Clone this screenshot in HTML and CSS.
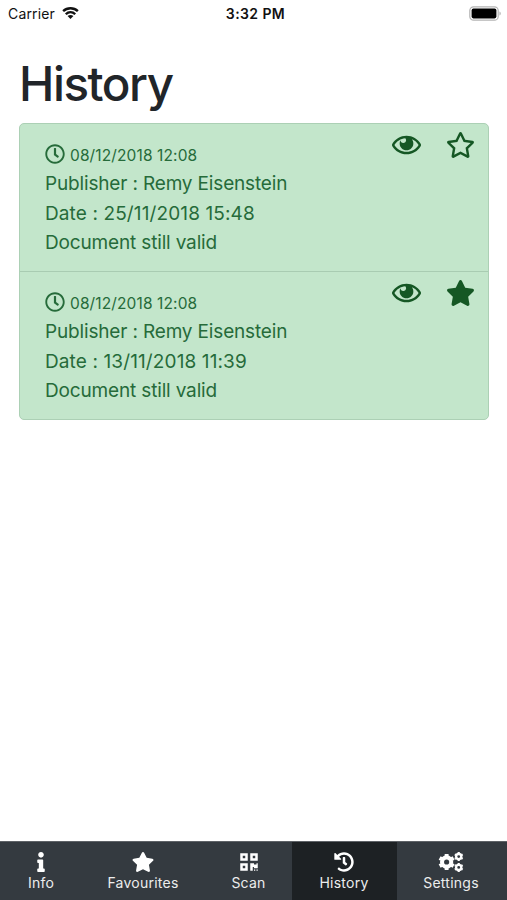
FILE: index.html
```html
<!DOCTYPE html>
<html lang="en">
<head>
<meta charset="utf-8">
<title>History</title>
<link rel="stylesheet" href="styles.css">
</head>
<body>
<svg class="symbols" aria-hidden="true">
  <symbol id="clock" viewBox="0 0 512 512"><path d="M256 8C119 8 8 119 8 256s111 248 248 248 248-111 248-248S393 8 256 8zm0 448c-110.500 0-200-89.500-200-200S145.500 56 256 56s200 89.500 200 200-89.500 200-200 200zm61.800-104.400l-84.900-61.700c-3.100-2.300-4.900-5.900-4.900-9.700V116c0-6.600 5.400-12 12-12h32c6.600 0 12 5.400 12 12v141.700l66.800 48.600c5.400 3.900 6.500 11.400 2.600 16.800L334.600 349c-3.900 5.300-11.400 6.500-16.800 2.600z"/></symbol>
  <symbol id="eye" viewBox="0 0 576 512"><path d="M569.354 231.631C512.970 135.949 407.810 72 288 72 168.140 72 63.004 135.994 6.646 231.631a47.999 47.999 0 0 0 0 48.739C63.031 376.051 168.190 440 288 440c119.860 0 224.996-63.994 281.354-159.631a47.997 47.997 0 0 0 0-48.738zM288 392c-102.556 0-192.091-54.701-240-136 44.157-74.933 123.677-127.270 216.162-135.007C273.958 131.078 280 144.830 280 160c0 30.928-25.072 56-56 56s-56-25.072-56-56l.001-.042C157.794 179.043 152 200.844 152 224c0 75.111 60.889 136 136 136s136-60.889 136-136c0-31.031-10.400-59.629-27.895-82.515C451.704 164.638 498.009 205.106 528 256c-47.908 81.299-137.444 136-240 136z"/></symbol>
  <symbol id="star" viewBox="0 0 576 512"><path d="M259.3 17.8L194 150.2 47.9 171.5c-26.2 3.8-36.7 36.1-17.7 54.6l105.7 103-25 145.5c-4.5 26.3 23.2 46 46.4 33.7L288 439.6l130.7 68.7c23.2 12.2 50.9-7.4 46.4-33.7l-25-145.5 105.7-103c19-18.5 8.5-50.8-17.7-54.6L382 150.2 316.7 17.8c-11.7-23.6-45.6-23.9-57.4 0z"/></symbol>
  <symbol id="star-outline" viewBox="0 0 576 512"><path d="M528.1 171.5L382 150.2 316.7 17.8c-11.7-23.6-45.6-23.9-57.4 0L194 150.2 47.9 171.5c-26.2 3.8-36.7 36.1-17.7 54.6l105.7 103-25 145.5c-4.5 26.3 23.2 46 46.4 33.7L288 439.6l130.7 68.7c23.2 12.2 50.9-7.4 46.4-33.7l-25-145.5 105.7-103c19-18.5 8.5-50.8-17.7-54.6zM388.6 312.3l23.7 138.4L288 385.4l-124.3 65.3 23.7-138.4-100.6-98 139-20.2 62.2-126 62.2 126 139 20.2-100.6 98z"/></symbol>
  <symbol id="info" viewBox="0 0 192 512"><path d="M20 424.229h20V279.771H20c-11.046 0-20-8.954-20-20V212c0-11.046 8.954-20 20-20h112c11.046 0 20 8.954 20 20v212.229h20c11.046 0 20 8.954 20 20V492c0 11.046-8.954 20-20 20H20c-11.046 0-20-8.954-20-20v-47.771c0-11.046 8.954-20 20-20zM96 0C56.235 0 24 32.235 24 72s32.235 72 72 72 72-32.235 72-72S135.764 0 96 0z"/></symbol>
  <symbol id="qrcode" viewBox="0 0 448 512"><path d="M0 224h192V32H0v192zM64 96h64v64H64V96zm192-64v192h192V32H256zm128 128h-64V96h64v64zM0 480h192V288H0v192zm64-128h64v64H64v-64zm352-64h32v128h-96v-32h-32v96h-64V288h96v32h64v-32zm0 160h32v32h-32v-32zm-64 0h32v32h-32v-32z"/></symbol>
  <symbol id="history" viewBox="0 0 512 512"><path d="M504 255.531c.253 136.640-111.180 248.372-247.820 248.468-59.015.042-113.223-20.530-155.822-54.911-11.077-8.940-11.905-25.541-1.839-35.607l11.267-11.267c8.609-8.609 22.353-9.551 31.891-1.984C173.062 425.135 212.781 440 256 440c101.705 0 184-82.311 184-184 0-101.705-82.311-184-184-184-48.814 0-93.149 18.969-126.068 49.932l50.754 50.754c10.080 10.080 2.941 27.314-11.313 27.314H24c-8.837 0-16-7.163-16-16V38.627c0-14.254 17.234-21.393 27.314-11.314l49.372 49.372C129.209 34.136 189.552 8 256 8c136.810 0 247.747 110.780 248 247.531zm-180.912 78.784l9.823-12.630c8.138-10.463 6.253-25.542-4.210-33.679L288 256.349V152c0-13.255-10.745-24-24-24h-16c-13.255 0-24 10.745-24 24v135.651l65.409 50.874c10.463 8.137 25.541 6.253 33.679-4.210z"/></symbol>
  <symbol id="cogs" viewBox="0 0 640 512">
    <g id="gear" fill="none" stroke="currentColor">
      <circle cx="208" cy="256" r="118" stroke-width="104"/>
      <path stroke-width="100" stroke-linejoin="round" d="M208 105V50M208 407v55M77 180l-48-27M339 332l48 27M77 332l-48 27M339 180l48-27"/>
    </g>
    <use href="#gear" transform="translate(401 -26) scale(.56)"/>
    <use href="#gear" transform="translate(401 251) scale(.56)"/>
  </symbol>
</svg>
<div class="screen">
  <header class="status">
    <span class="carrier">Carrier
      <svg class="wifi" viewBox="0 0 18 14" fill="none" stroke="currentColor" stroke-width="2.500"><path d="M1.200 5.100C5.500.9 12.500.9 16.800 5.100M4 8.300c2.900-2.800 7.100-2.800 10 0"/><path fill="currentColor" stroke="none" d="M5.900 10.300c1.900-1.700 4.300-1.700 6.200 0L9 13.400z"/></svg>
    </span>
    <span class="time">3:32 PM</span>
    <svg class="battery" viewBox="0 0 32 15"><rect x=".8" y=".8" width="28.400" height="13.400" rx="3.800" fill="#fff" stroke="#b4b4b4" stroke-width="1.200"/><rect x="2.600" y="2.600" width="24.800" height="9.800" rx="1.800"/><path d="M30.500 5.500c1.600.7 1.600 3.300 0 4z" fill="#aaa"/></svg>
  </header>
  <main>
    <h1>History</h1>
    <ul class="list">
      <li class="item">
        <div class="details">
          <div class="stamp"><svg class="clock"><use href="#clock"/></svg><span>08/12/2018 12:08</span></div>
          <div class="publisher">Publisher : Remy Eisenstein</div>
          <div class="date">Date : 25/11/2018 15:48</div>
          <div class="validity">Document still valid</div>
        </div>
        <div class="actions"><svg><use href="#eye"/></svg><svg><use href="#star-outline"/></svg></div>
      </li>
      <li class="item">
        <div class="details">
          <div class="stamp"><svg class="clock"><use href="#clock"/></svg><span>08/12/2018 12:08</span></div>
          <div class="publisher">Publisher : Remy Eisenstein</div>
          <div class="date">Date : 13/11/2018 11:39</div>
          <div class="validity">Document still valid</div>
        </div>
        <div class="actions"><svg><use href="#eye"/></svg><svg><use href="#star"/></svg></div>
      </li>
    </ul>
  </main>
  <nav class="tabs">
    <a class="tab"><svg><use href="#info"/></svg><span>Info</span></a>
    <a class="tab"><svg><use href="#star"/></svg><span>Favourites</span></a>
    <a class="tab scan"><svg><use href="#qrcode"/></svg><span>Scan</span></a>
    <a class="tab active"><svg><use href="#history"/></svg><span>History</span></a>
    <a class="tab settings"><svg><use href="#cogs"/></svg><span>Settings</span></a>
  </nav>
</div>
</body>
</html>
```
FILE: styles.css
```css
* { box-sizing: border-box; }
body {
  margin: 0;
  background: #fff;
  color: #212529;
  font-family: Inter, "Liberation Sans", sans-serif;
}
svg { display: block; fill: currentColor; }
.symbols { position: absolute; width: 0; height: 0; }
.screen { height: 900px; display: flex; flex-direction: column; }
.status {
  height: 27px;
  padding: 0 8px;
  display: grid;
  grid-template-columns: 1fr auto 1fr;
  align-items: center;
  color: #111;
  font-size: 14px;
  line-height: 27px;
}
.carrier { display: flex; align-items: center; gap: 7px; letter-spacing: .15px; }
.wifi { width: 17px; height: 14px; margin-top: -1px; fill: none; }
.time { font-weight: 600; letter-spacing: .4px; padding-left: 4px; }
.battery { width: 32px; height: 15px; justify-self: end; margin-right: -2px; color: #000; }
main { flex: 1; padding: 28px 18px 0 19px; }
h1 { margin: 0; height: 68px; font-size: 47.5px; line-height: 57px; font-weight: 500; letter-spacing: -1.45px; }
.list {
  list-style: none;
  margin: 0;
  padding: 0;
  border: 1px solid #acd0b5;
  border-radius: 5px;
  background: #c3e6cb;
  color: #266b3a;
}
.item { display: flex; justify-content: space-between; height: 147px; padding: 16px 13px 0 25px; }
.item + .item { border-top: 1px solid #a9ccb2; height: 148px; }
.details { font-size: 19px; line-height: 29.3px; white-space: nowrap; }
.publisher, .validity { letter-spacing: -.16px; }
.date { letter-spacing: .12px; }
.stamp { display: flex; align-items: center; gap: 5px; height: 29.3px; font-size: 15.500px; letter-spacing: .12px; }
.stamp span { padding-top: 2px; }
.clock { width: 20px; height: 20px; margin-top: -2px; }
.actions { display: flex; gap: 25px; margin-top: -8px; color: #155724; }
.actions svg { width: 29px; height: 26px; }
.tabs {
  height: 59px;
  display: grid;
  grid-template-columns: 82fr 122fr 88fr 105fr 110fr;
  background: #343a40;
  color: #fff;
  border-top: 1px solid #5e6267;
}
.tab { display: flex; flex-direction: column; align-items: center; padding-top: 10px; }
.tab svg { height: 20px; width: 26px; }
.tab span { font-size: 14px; line-height: 20px; margin-top: 1px; letter-spacing: .25px; color: #eceded; }
.scan { padding-left: 1px; }
.active { padding-right: 1px; }
.settings { padding-right: 2px; }
.active { background: #1d2124; }
```
